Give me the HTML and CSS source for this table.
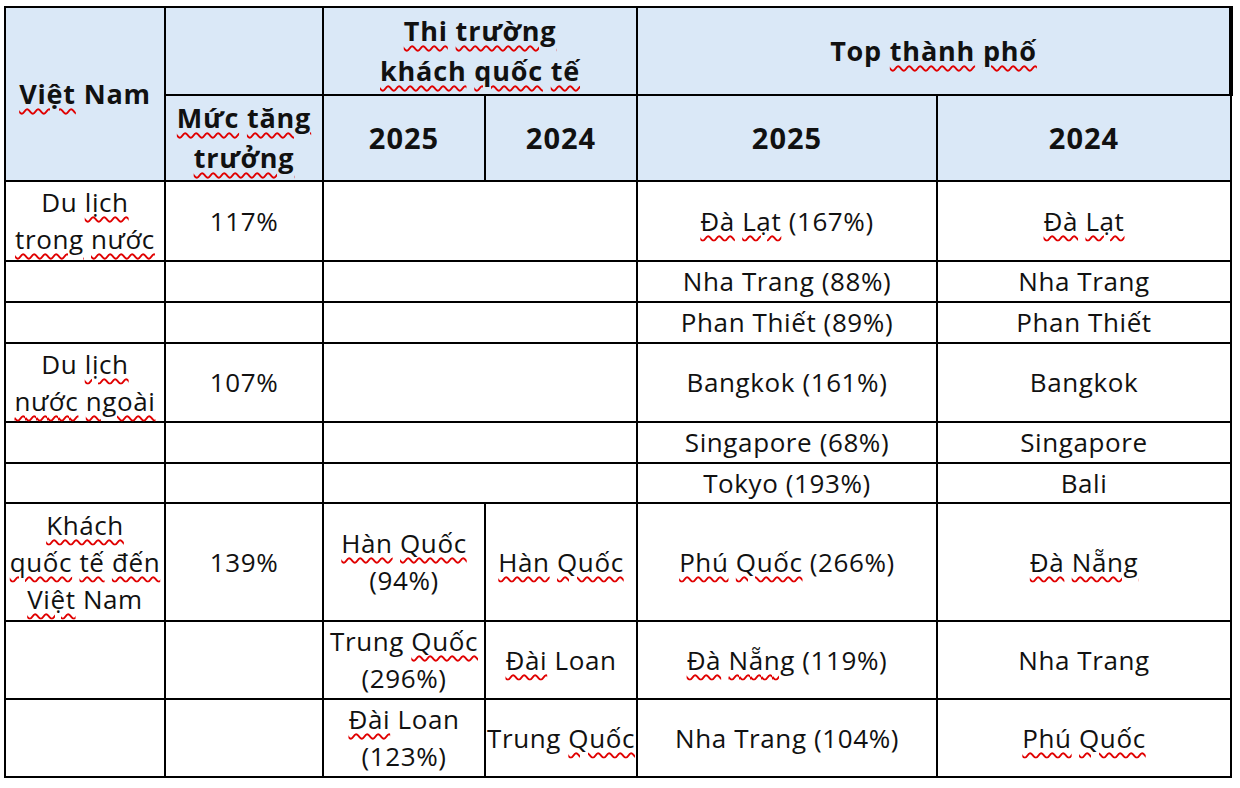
FILE: index.html
```html
<!DOCTYPE html>
<html lang="vi">
<head>
<meta charset="utf-8">
<title>Du lịch</title>
<link rel="stylesheet" href="styles.css">
</head>
<body>
<table class="tbl">
  <colgroup>
    <col class="c1"><col class="c2"><col class="c3"><col class="c4"><col class="c5"><col class="c6">
  </colgroup>
  <thead>
    <tr class="h1">
      <th rowspan="2" class="th"><span class="sp">Việt</span> Nam</th>
      <th class="th"></th>
      <th colspan="2" class="th"><span class="sp">Thi</span> <span class="sp">trường</span><br><span class="sp">khách</span> <span class="sp">quốc</span> <span class="sp">tế</span></th>
      <th colspan="2" class="th edge">Top <span class="sp">thành</span> <span class="sp">phố</span></th>
    </tr>
    <tr class="h2">
      <th class="th"><span class="sp">Mức</span> <span class="sp">tăng</span><br><span class="sp">trưởng</span></th>
      <th class="th yr">2025</th>
      <th class="th yr">2024</th>
      <th class="th yr">2025</th>
      <th class="th yr">2024</th>
    </tr>
  </thead>
  <tbody>
    <tr class="r80">
      <td>Du <span class="sp">lịch</span><br><span class="sp">trong</span> <span class="sp">nước</span></td>
      <td>117%</td><td colspan="2"></td>
      <td><span class="sp">Đà</span> <span class="sp">Lạt</span> (167%)</td>
      <td><span class="sp">Đà</span> <span class="sp">Lạt</span></td>
    </tr>
    <tr class="r41">
      <td></td><td></td><td colspan="2"></td>
      <td>Nha Trang (88%)</td><td>Nha Trang</td>
    </tr>
    <tr class="r41">
      <td></td><td></td><td colspan="2"></td>
      <td>Phan Thiết (89%)</td><td>Phan Thiết</td>
    </tr>
    <tr class="r79">
      <td>Du <span class="sp">lịch</span><br><span class="sp">nước</span> <span class="sp">ngoài</span></td>
      <td>107%</td><td colspan="2"></td>
      <td>Bangkok (161%)</td><td>Bangkok</td>
    </tr>
    <tr class="r41">
      <td></td><td></td><td colspan="2"></td>
      <td>Singapore (68%)</td><td>Singapore</td>
    </tr>
    <tr class="r40">
      <td></td><td></td><td colspan="2"></td>
      <td>Tokyo (193%)</td><td>Bali</td>
    </tr>
    <tr class="r118">
      <td><span class="sp">Khách</span><br><span class="sp">quốc</span> <span class="sp">tế</span> <span class="sp">đến</span><br><span class="sp">Việt</span> Nam</td>
      <td>139%</td>
      <td><span class="sp">Hàn</span> <span class="sp">Quốc</span><br>(94%)</td>
      <td><span class="sp">Hàn</span> <span class="sp">Quốc</span></td>
      <td><span class="sp">Phú</span> <span class="sp">Quốc</span> (266%)</td>
      <td><span class="sp">Đà</span> <span class="sp">Nẵng</span></td>
    </tr>
    <tr class="r78">
      <td></td><td></td>
      <td>Trung <span class="sp">Quốc</span><br>(296%)</td>
      <td><span class="sp">Đài</span> Loan</td>
      <td><span class="sp">Đà</span> <span class="sp">Nẵng</span> (119%)</td>
      <td>Nha Trang</td>
    </tr>
    <tr class="r78">
      <td></td><td></td>
      <td><span class="sp">Đài</span> Loan<br>(123%)</td>
      <td>Trung <span class="sp">Quốc</span></td>
      <td>Nha Trang (104%)</td>
      <td><span class="sp">Phú</span> <span class="sp">Quốc</span></td>
    </tr>
  </tbody>
</table>
</body>
</html>
```
FILE: styles.css
```css
html, body {
  margin: 0;
  padding: 0;
  background: #ffffff;
}
body {
  padding: 6px 0 0 4px;
  font-family: "Open Sans", "Noto Sans", "DejaVu Sans", sans-serif;
  color: #111111;
}
.tbl {
  border-collapse: collapse;
  table-layout: fixed;
  width: 1226px;
  font-size: 26px;
  letter-spacing: 0.6px;
  line-height: 37px;
}
.c1 { width: 160px; }
.c2 { width: 158px; }
.c3 { width: 162px; }
.c4 { width: 152px; }
.c5 { width: 300px; }
.c6 { width: 294px; }
.tbl th,
.tbl td {
  border: 2px solid #000000;
  padding: 0;
  text-align: center;
  vertical-align: middle;
  white-space: nowrap;
  overflow: visible;
}
.tbl th {
  background: #dae8f7;
  font-weight: 700;
  font-size: 27px;
  letter-spacing: 0.8px;
  line-height: 40px;
}
.tbl th.yr {
  font-size: 29px;
  letter-spacing: 1px;
}
.tbl th.edge {
  border-right-width: 4px;
}
.h1 { height: 88px; }
.h2 { height: 86px; }
.r80 { height: 80px; }
.r41 { height: 41px; }
.r79 { height: 79px; }
.r40 { height: 40px; }
.r118 { height: 118px; }
.r78 { height: 78px; }
.sp {
  text-decoration-line: underline;
  text-decoration-style: wavy;
  text-decoration-color: #e00000;
  text-decoration-thickness: 1.6px;
  text-underline-offset: 4px;
}
```
